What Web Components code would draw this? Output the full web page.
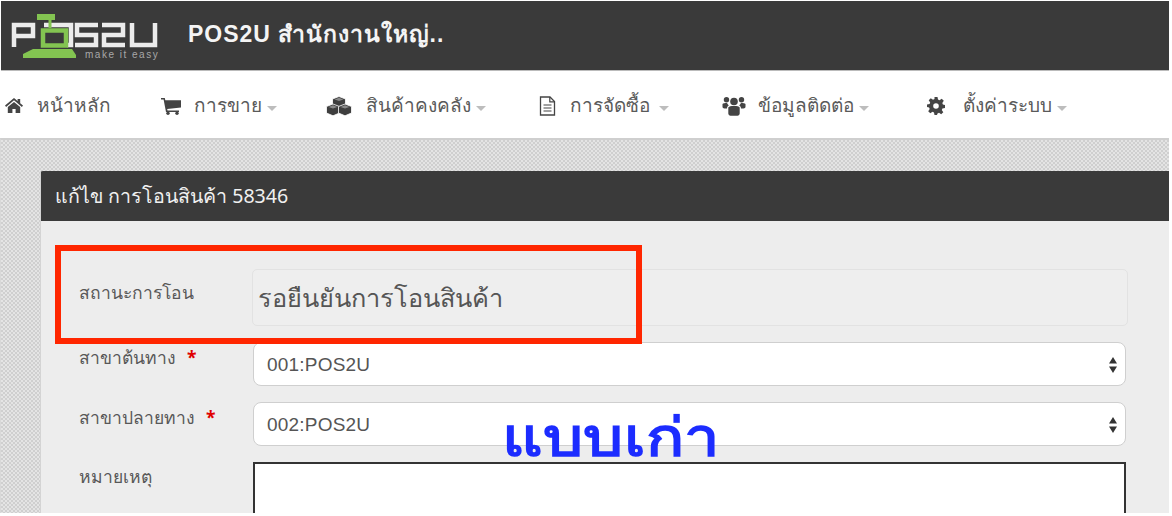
<!DOCTYPE html>
<html lang="th">
<head>
<meta charset="utf-8">
<title>POS2U</title>
<style>
  html, body { margin: 0; height: 516px; overflow: hidden; background: #fff; }
  body { font-family: "Noto Sans", "Liberation Sans", sans-serif; color: #555; }
</style>
</head>
<body>

<pos-page>
  <pos-topbar slot="top" branch="POS2U สำนักงานใหญ่.."></pos-topbar>
  <pos-menu slot="top">
    <pos-menu-item icon="home" gap="14" width="156">หน้าหลัก</pos-menu-item>
    <pos-menu-item icon="cart" gap="13" caret width="165">การขาย</pos-menu-item>
    <pos-menu-item icon="cubes" gap="14" caret width="213">สินค้าคงคลัง</pos-menu-item>
    <pos-menu-item icon="file" gap="14" caret="9" width="183">การจัดซื้อ</pos-menu-item>
    <pos-menu-item icon="users" gap="12" caret width="205">ข้อมูลติดต่อ</pos-menu-item>
    <pos-menu-item icon="cog" gap="18" caret>ตั้งค่าระบบ</pos-menu-item>
  </pos-menu>
  <pos-panel heading="แก้ไข การโอนสินค้า 58346">
    <pos-status label="สถานะการโอน" value="รอยืนยันการโอนสินค้า"></pos-status>
    <pos-select label="สาขาต้นทาง" value="001:POS2U"></pos-select>
    <pos-select label="สาขาปลายทาง" value="002:POS2U"></pos-select>
    <pos-note label="หมายเหตุ"></pos-note>
  </pos-panel>
  <pos-callout slot="over" text="แบบเก่า"></pos-callout>
</pos-page>

<script>
// small helper so every element sets up its shadow root the same way
const shadow = (el, html) => {
  const root = el.attachShadow({ mode: "open" });
  root.innerHTML = html;
  return root;
};

const icons = {
  home: `<svg viewBox="0 0 18 15" width="18" height="15"><path fill="#444" d="M9 0 12.600 3V1h2.600v4.200L18 7.600l-1.100 1.300L9 2.300 1.100 8.900 0 7.600zM2.800 9 9 3.900 15.200 9v6h-4.600v-4H7.400v4H2.800z"/></svg>`,
  cart: `<svg viewBox="0 0 20 18" width="20" height="18"><path fill="#444" d="M0 1h3.800l.5 2.200H20v7.300L6.200 12l.3 1.500H18V15H5L2.600 2.600H0z"/><circle cx="7" cy="16.300" r="1.700" fill="#444"/><circle cx="16" cy="16.300" r="1.700" fill="#444"/></svg>`,
  cubes: `<svg viewBox="0 0 26 20" width="26" height="20"><g fill="#3e3e3e" stroke="#fff" stroke-width=".8"><path d="M13 .5 19.500 3v6.500L13 12 6.500 9.500V3z"/><path d="M7 8 13.500 10.500V17L7 19.800.5 17V10.500z"/><path d="M19 8 25.500 10.500V17L19 19.800 12.500 17V10.500z"/></g><g fill="#8a8a8a"><path d="M13 1.800 17.400 3.400 13 5 8.600 3.400z"/><path d="M7 9.300 11.400 10.900 7 12.500 2.600 10.900z"/><path d="M19 9.300 23.400 10.900 19 12.500 14.600 10.900z"/></g></svg>`,
  file: `<svg viewBox="0 0 17 20" width="17" height="20"><path fill="none" stroke="#444" stroke-width="1.300" d="M1.500 1h9.500l4.500 4.500V19h-14z"/><path fill="none" stroke="#444" stroke-width="1.200" d="M10.800 1v4.800h4.700M4.500 9h8M4.500 12h8M4.500 15h8"/></svg>`,
  users: `<svg viewBox="0 0 24 20" width="24" height="20"><g fill="#444"><circle cx="12" cy="5.500" r="3.800"/><circle cx="4.500" cy="3.800" r="2.700"/><circle cx="19.500" cy="3.800" r="2.700"/><path d="M6.300 11.500C7 10 9 10 12 10s5 0 5.700 1.500V17.500c0 1.200-1 2.200-2.200 2.200h-7c-1.200 0-2.200-1-2.200-2.200z"/><path d="M.5 8C1 7 3 7 5 7c.5 1 1 1.800 1.800 2.400-1.200.5-1.800 1.500-1.800 3H2.500C1.300 12.400.5 11.800.5 10.800zM23.500 8c-.5-1-2.500-1-4.500-1-.5 1-1 1.800-1.800 2.400 1.200.5 1.800 1.500 1.800 3h2.500c1.200 0 2-.6 2-1.600z"/></g></svg>`,
  cog: `<svg viewBox="0 0 18 18" width="18" height="18"><path fill="#444" fill-rule="evenodd" d="M7.500 0h3l.5 2.600 1.500.6L14.700 1.700l2.100 2.100-1.500 2.200.6 1.500L18 8v3l-2.600.5-.6 1.500 1.500 2.200-2.100 2.100-2.200-1.500-1.500.6L10 18H7.500L7 15.400l-1.500-.6-2.200 1.500-2.100-2.100L2.700 12l-.6-1.500L0 10V7.500L2.600 7l.6-1.500L1.700 3.300l2.100-2.100L6 2.700l1.500-.6zM9 6.200a2.800 2.800 0 1 0 0 5.600 2.800 2.800 0 0 0 0-5.600z"/></svg>`
};

class PosPage extends HTMLElement {
  constructor() {
    super();
    shadow(this, `
      <style>
        :host { display: block; position: relative; width: 1172px; height: 516px; overflow: hidden; background: #fff; }
        .main {
          height: 375px;
          margin-right: 3px;
          box-sizing: border-box;
          border-top: 2px solid #cfcfcf;
          border-left: 1px solid #d8d8d8;
          padding: 31px 0 0 39px;
          background-color: #dcdcdc;
          background-image: conic-gradient(#cfcfcf 25%, #e4e4e4 0 50%, #cfcfcf 0 75%, #e4e4e4 0);
          background-size: 4px 4px;
        }
      </style>
      <slot name="top"></slot>
      <div class="main"><slot></slot></div>
      <slot name="over"></slot>
    `);
  }
}

class PosTopbar extends HTMLElement {
  constructor() {
    super();
    // logo is drawn in page pixels, the viewBox lines up with the screenshot
    shadow(this, `
      <style>
        :host { display: flex; height: 70px; margin: 1px 3px 0 1px; background: #3a3a3a; border-bottom: 1px solid #bbb; box-sizing: border-box; }
        svg { display: block; margin: 4px 0 0 -1px; flex: none; }
        .name { align-self: center; margin: -2px 0 0 18px; color: #f4f4f4; font: 700 23px/1 "Liberation Sans", "Noto Sans", sans-serif; letter-spacing: .95px; }
      </style>
      <svg width="170" height="65" viewBox="0 5 170 65" aria-hidden="true">
        <g fill="none" stroke="#ececec" stroke-width="4.500">
          <path d="M14 47V25H33V36H14"/>
          <path d="M44 25H71V45H67"/>
          <path d="M98 25H77V35H96V45H75"/>
          <path d="M102 25H123V35H104V45H125"/>
          <path d="M132 23V45H155V23"/>
        </g>
        <path fill="none" stroke="#83c451" stroke-width="4.500" d="M43 30.500H66V45.500H43z"/>
        <path fill="none" stroke="#83c451" stroke-width="3" d="M50 19V28"/>
        <g fill="#83c451">
          <path d="M37 14H55V20H37z"/>
          <path d="M33 49H72L76 55V58H23V54z"/>
        </g>
        <text x="85" y="58" fill="#a8a8a8" font-family="'Liberation Sans', sans-serif" font-size="10" letter-spacing="1.500">make it easy</text>
      </svg>
      <div class="name"></div>
    `);
    this.shadowRoot.querySelector(".name").textContent = this.getAttribute("branch");
  }
}

class PosMenu extends HTMLElement {
  constructor() {
    super();
    shadow(this, `
      <style>
        :host { display: flex; align-items: center; height: 67px; padding: 2px 0 0 5px; box-sizing: border-box; }
      </style>
      <slot></slot>
    `);
  }
}

class PosMenuItem extends HTMLElement {
  constructor() {
    super();
    const caretGap = this.getAttribute("caret") || 5;
    const caret = this.hasAttribute("caret") ? `<span class="caret" style="margin-left:${caretGap}px"></span>` : "";
    const gap = this.getAttribute("gap") || 12;
    shadow(this, `
      <style>
        :host { display: flex; align-items: center; flex: none; color: #5a5a5a; font: 19px/1 "Noto Sans", "Liberation Sans", sans-serif; }
        .ico { display: flex; align-items: center; justify-content: center; flex: none; }
        .caret { width: 0; height: 0; margin-top: 6px; border: 5px solid transparent; border-bottom: 0; border-top-color: #bdbdbd; }
      </style>
      <span class="ico" style="margin-right:${gap}px">${icons[this.getAttribute("icon")]}</span>
      <slot></slot>${caret}
    `);
    const w = this.getAttribute("width");
    if (w) this.style.width = w + "px";
  }
}

class PosPanel extends HTMLElement {
  constructor() {
    super();
    shadow(this, `
      <style>
        :host { display: block; height: 342px; background: #ededed; border-left: 1px solid #d4d4d4; overflow: hidden; }
        .head { height: 50px; margin-left: -1px; padding-left: 15px; display: flex; align-items: center; background: #3a3a3a; color: #f0f0f0; border-radius: 3px 0 0 0; font: 19.6px/1 "Noto Sans", "Liberation Sans", sans-serif; }
        .body { display: flex; flex-direction: column; padding: 48px 0 0 38px; }
      </style>
      <div class="head"></div>
      <div class="body"><slot></slot></div>
    `);
    this.shadowRoot.querySelector(".head").textContent = this.getAttribute("heading");
  }
}

// shared row layout: label column on the left, control on the right
const rowStyle = `
  :host { display: grid; grid-template-columns: 174px 1fr; }
  .label { color: #585858; font: 17.500px/1.2 "Noto Sans", "Liberation Sans", sans-serif; }
  .req { color: #e00000; margin-left: 11px; font-weight: 700; }
`;

class PosStatus extends HTMLElement {
  constructor() {
    super();
    shadow(this, `
      <style>${rowStyle}
        :host { height: 73px; }
        .label { padding-top: 13px; }
        .val { width: 876px; height: 57px; margin-left: -1px; box-sizing: border-box; display: flex; align-items: center; padding: 1px 0 0 5px; background: #eee; border: 1px solid #e2e2e2; border-radius: 5px; color: #555; font: 25.300px/1 "Noto Sans", "Liberation Sans", sans-serif; }
      </style>
      <div class="label"></div><div class="val"></div>
    `);
    this.shadowRoot.querySelector(".label").textContent = this.getAttribute("label");
    this.shadowRoot.querySelector(".val").textContent = this.getAttribute("value");
  }
}

class PosSelect extends HTMLElement {
  constructor() {
    super();
    shadow(this, `
      <style>${rowStyle}
        :host { height: 60px; }
        .label { margin-top: 5px; }
        .sel { position: relative; width: 873px; height: 44px; box-sizing: border-box; display: flex; align-items: center; padding-left: 13px; background: #fff; border: 1px solid #cfcfcf; border-radius: 8px; color: #555; font: 19px/1 "Liberation Sans", sans-serif; letter-spacing: .2px; }
        svg { position: absolute; right: 7px; top: 13px; }
      </style>
      <div class="label"><span class="t"></span><span class="req">*</span></div>
      <div class="sel"><span class="v"></span>
        <svg width="10" height="18" viewBox="0 0 10 18"><path fill="#333" d="M5 1l4 6.500H1zM5 17l4-6.500H1z"/></svg>
      </div>
    `);
    this.shadowRoot.querySelector(".t").textContent = this.getAttribute("label");
    this.shadowRoot.querySelector(".v").textContent = this.getAttribute("value");
  }
}

class PosNote extends HTMLElement {
  constructor() {
    super();
    shadow(this, `
      <style>${rowStyle}
        .box { width: 873px; height: 80px; box-sizing: border-box; background: #fff; border: 2px solid #333; border-bottom: 0; }
        .label { padding-top: 4px; }
      </style>
      <div class="label"></div><div class="box"></div>
    `);
    this.shadowRoot.querySelector(".label").textContent = this.getAttribute("label");
  }
}

// annotations drawn on top of the screenshot
class PosCallout extends HTMLElement {
  constructor() {
    super();
    shadow(this, `
      <style>
        :host { display: block; }
        .frame { position: absolute; left: 55px; top: 245px; width: 587px; height: 99px; box-sizing: border-box; border: 6px solid #ff2600; }
        .old { position: absolute; left: 502px; top: 401px; color: #1c2cff; font: 700 56px/1.3 "Noto Sans", "Liberation Sans", sans-serif; white-space: nowrap; transform: scale(1.13, .95); transform-origin: left top; }
      </style>
      <div class="frame"></div>
      <div class="old"></div>
    `);
    this.shadowRoot.querySelector(".old").textContent = this.getAttribute("text");
  }
}

customElements.define("pos-page", PosPage);
customElements.define("pos-topbar", PosTopbar);
customElements.define("pos-menu", PosMenu);
customElements.define("pos-menu-item", PosMenuItem);
customElements.define("pos-panel", PosPanel);
customElements.define("pos-status", PosStatus);
customElements.define("pos-select", PosSelect);
customElements.define("pos-note", PosNote);
customElements.define("pos-callout", PosCallout);
</script>
</body>
</html>
